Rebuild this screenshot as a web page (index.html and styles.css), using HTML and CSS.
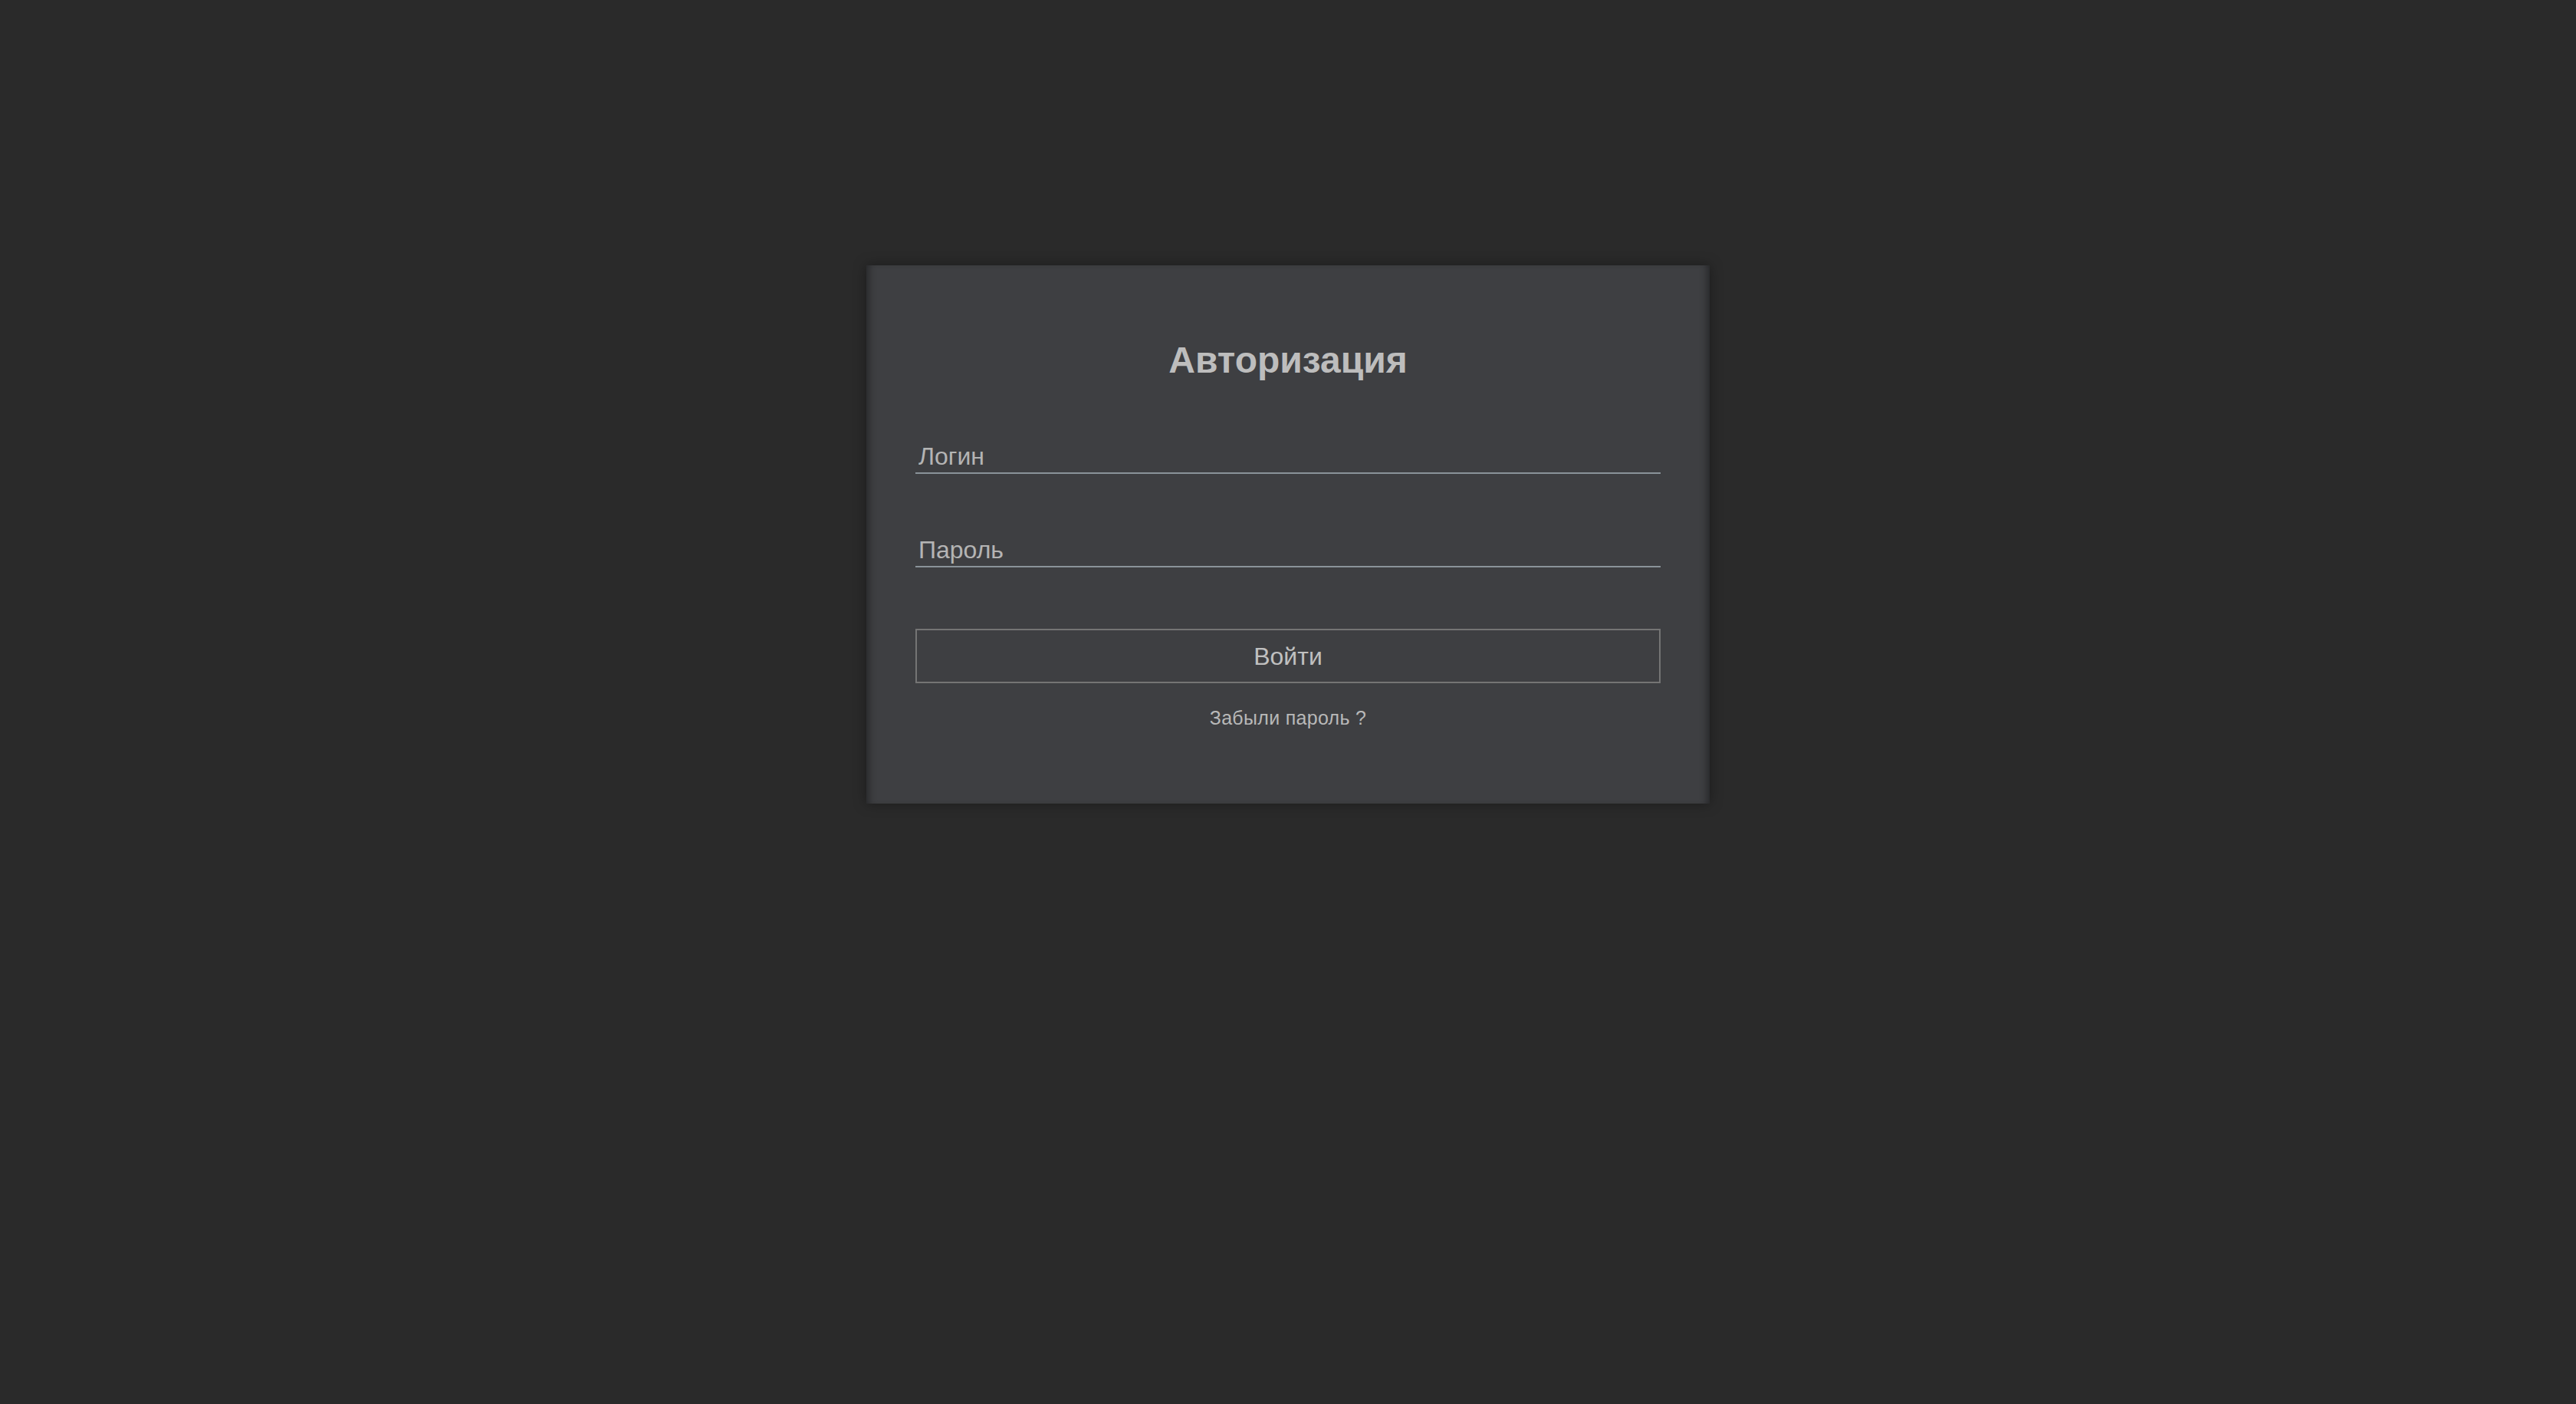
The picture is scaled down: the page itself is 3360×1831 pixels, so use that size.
FILE: index.html
```html
<!DOCTYPE html>
<html lang="ru">
<head>
<meta charset="utf-8">
<title>Авторизация</title>
<link rel="stylesheet" href="styles.css">
</head>
<body>
<main class="page">
  <form class="card">
    <h1 class="title">Авторизация</h1>
    <input class="field" type="text" placeholder="Логин">
    <input class="field field-gap" type="password" placeholder="Пароль">
    <button class="btn" type="button">Войти</button>
    <a class="forgot" href="#">Забыли пароль ?</a>
  </form>
</main>
</body>
</html>
```
FILE: styles.css
```css
html, body {
  margin: 0;
  padding: 0;
  height: 100%;
}
body {
  background: #2a2a2a;
  font-family: "Liberation Sans", Arial, sans-serif;
}
.page {
  display: flex;
  justify-content: center;
  padding-top: 346px;
}
.card {
  box-sizing: border-box;
  width: 1100px;
  height: 702px;
  padding: 100px 64px 0;
  background: #3e3f42;
  box-shadow:
    inset 10px 0 10px -6px rgba(0, 0, 0, 0.35),
    inset -10px 0 10px -6px rgba(0, 0, 0, 0.35),
    0 0 16px rgba(0, 0, 0, 0.35);
  display: flex;
  flex-direction: column;
  align-items: stretch;
}
.title {
  margin: 0 0 85px;
  font-size: 48px;
  line-height: 48px;
  font-weight: bold;
  text-align: center;
  color: #bdbdbd;
}
.field {
  box-sizing: border-box;
  display: block;
  width: 100%;
  height: 39px;
  margin: 0;
  padding: 0 4px 5px;
  border: none;
  border-bottom: 2px solid #8a9399;
  background: transparent;
  font-family: inherit;
  font-size: 32px;
  line-height: 32px;
  color: #bdbdbd;
  outline: none;
}
.field::placeholder {
  color: #b4b4b4;
  opacity: 1;
}
.field-gap {
  margin-top: 83px;
}
.btn {
  box-sizing: border-box;
  display: block;
  width: 100%;
  height: 71px;
  margin: 80px 0 0;
  padding: 0;
  border: 2px solid #747474;
  background: transparent;
  font-family: inherit;
  font-size: 32px;
  line-height: 32px;
  color: #c0c0c0;
  cursor: pointer;
}
.forgot {
  display: block;
  margin-top: 33px;
  font-size: 25px;
  line-height: 25px;
  letter-spacing: 0.3px;
  text-align: center;
  color: #b8b8b8;
  text-decoration: none;
}
```
